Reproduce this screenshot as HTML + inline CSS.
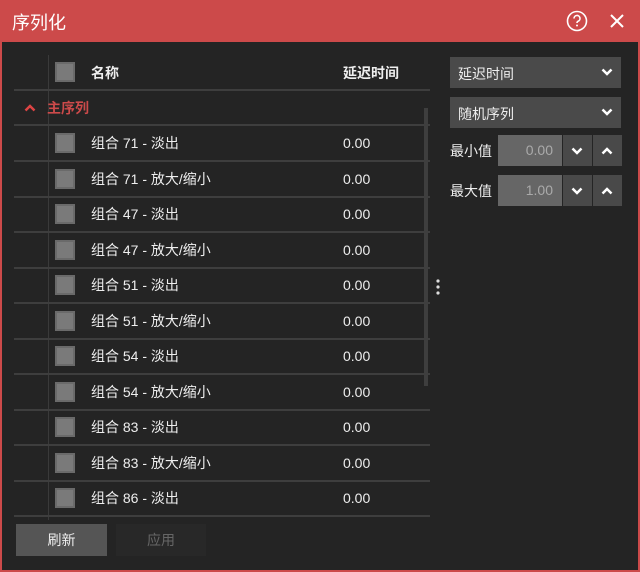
<!DOCTYPE html>
<html><head><meta charset="utf-8"><style>
*{margin:0;padding:0;box-sizing:border-box}
body{width:640px;height:572px;background:#cc4a4a;font-family:"Liberation Sans","Noto Sans CJK SC",sans-serif;position:relative;overflow:hidden;color:#eee}
.title{position:absolute;left:0;top:0;width:640px;height:42px;background:#cc4a4a}
.title span{position:absolute;left:12px;top:9px;font-size:18px;color:#fff}
.main{position:absolute;left:2px;top:42px;width:636px;height:528px;background:#242424}
.abs{position:absolute}
.hl{position:absolute;left:14px;width:416px;height:2px;background:#3e3e3e}
.cb{position:absolute;left:55px;width:20px;height:20px;background:#7a7a7a;border:2px solid #6a6a6a}
.t{position:absolute;font-size:14px;color:#eee;line-height:16px}
.dd{position:absolute;left:450px;width:171px;height:31px;background:#4a4a4a;font-size:14px;color:#eee;padding:7px 8px}
.btn{position:absolute;background:#494949;width:29px;height:31px}
svg{position:absolute}
</style></head><body>
<div class="title"><span>序列化</span>
<svg style="left:566px;top:10px" width="22" height="22" viewBox="0 0 22 22"><circle cx="11" cy="11" r="9.5" fill="none" stroke="#fff" stroke-width="1.6"/><path d="M8 8.5a3 3 0 1 1 4 2.8c-.8.4-1 .9-1 1.7" fill="none" stroke="#fff" stroke-width="1.6"/><circle cx="11" cy="15.5" r="1" fill="#fff"/></svg>
<svg style="left:609px;top:13px" width="16" height="16" viewBox="0 0 16 16"><path d="M2 2L14 14M14 2L2 14" stroke="#fff" stroke-width="2"/></svg>
</div>
<div class="main"></div>
<div class="abs" style="left:48px;top:55px;width:1px;height:465px;background:#3a3a3a"></div>
<div class="cb" style="top:62px"></div>
<div class="t" style="left:91px;top:65px;font-weight:bold">名称</div>
<div class="t" style="left:343px;top:65px;font-weight:bold">延迟时间</div>
<div class="hl" style="top:89px"></div>
<svg style="left:23px;top:102px" width="14" height="12" viewBox="0 0 14 12"><path d="M2.5 8.5L7 4L11.5 8.5" fill="none" stroke="#d44" stroke-width="2.5"/></svg>
<div class="t" style="left:47px;top:100px;color:#cc4a4a;font-weight:bold">主序列</div>
<div class="abs" style="left:424px;top:108px;width:4px;height:278px;background:#3e3e3e"></div>
<div class="hl" style="top:124px"></div>
<div id="rows"></div>
<svg style="left:435px;top:278px" width="6" height="18"><circle cx="3" cy="3" r="1.6" fill="#ddd"/><circle cx="3" cy="9" r="1.6" fill="#ddd"/><circle cx="3" cy="15" r="1.6" fill="#ddd"/></svg>
<div class="dd" style="top:57px">延迟时间</div>
<div class="dd" style="top:97px">随机序列</div>
<svg style="left:600px;top:66px" width="14" height="12"><path d="M2.5 3.5L7 8L11.5 3.5" fill="none" stroke="#fff" stroke-width="2.5"/></svg>
<svg style="left:600px;top:106px" width="14" height="12"><path d="M2.5 3.5L7 8L11.5 3.5" fill="none" stroke="#fff" stroke-width="2.5"/></svg>
<div class="t" style="left:450px;top:143px">最小值</div>
<div class="abs" style="left:498px;top:135px;width:64px;height:31px;background:#666;color:#aaa;font-size:14px;text-align:right;padding:7px 9px 0 0">0.00</div>
<div class="btn" style="left:563px;top:135px"></div><div class="btn" style="left:593px;top:135px"></div>
<svg style="left:570px;top:145px" width="14" height="12"><path d="M2.5 3.5L7 8L11.5 3.5" fill="none" stroke="#fff" stroke-width="2.5"/></svg>
<svg style="left:600px;top:145px" width="14" height="12"><path d="M2.5 8.5L7 4L11.5 8.5" fill="none" stroke="#fff" stroke-width="2.5"/></svg>
<div class="t" style="left:450px;top:183px">最大值</div>
<div class="abs" style="left:498px;top:175px;width:64px;height:31px;background:#666;color:#aaa;font-size:14px;text-align:right;padding:7px 9px 0 0">1.00</div>
<div class="btn" style="left:563px;top:175px"></div><div class="btn" style="left:593px;top:175px"></div>
<svg style="left:570px;top:185px" width="14" height="12"><path d="M2.5 3.5L7 8L11.5 3.5" fill="none" stroke="#fff" stroke-width="2.5"/></svg>
<svg style="left:600px;top:185px" width="14" height="12"><path d="M2.5 8.5L7 4L11.5 8.5" fill="none" stroke="#fff" stroke-width="2.5"/></svg>
<div class="abs" style="left:16px;top:524px;width:91px;height:32px;background:#555;font-size:14px;color:#eee;text-align:center;line-height:32px">刷新</div>
<div class="abs" style="left:116px;top:524px;width:90px;height:32px;background:#282828;font-size:14px;color:#666;text-align:center;line-height:32px">应用</div>
<script>
var n=["组合 71 - 淡出","组合 71 - 放大/缩小","组合 47 - 淡出","组合 47 - 放大/缩小","组合 51 - 淡出","组合 51 - 放大/缩小","组合 54 - 淡出","组合 54 - 放大/缩小","组合 83 - 淡出","组合 83 - 放大/缩小","组合 86 - 淡出"],h="";
for(var i=0;i<n.length;i++){var c=143+i*35.5;h+='<div class="cb" style="top:'+(c-10)+'px"></div><div class="t" style="left:91px;top:'+(c-8)+'px">'+n[i]+'</div><div class="t" style="left:343px;top:'+(c-8)+'px">0.00</div><div class="hl" style="top:'+(c+17)+'px"></div>';}
document.getElementById("rows").innerHTML=h;
</script>
</body></html>
